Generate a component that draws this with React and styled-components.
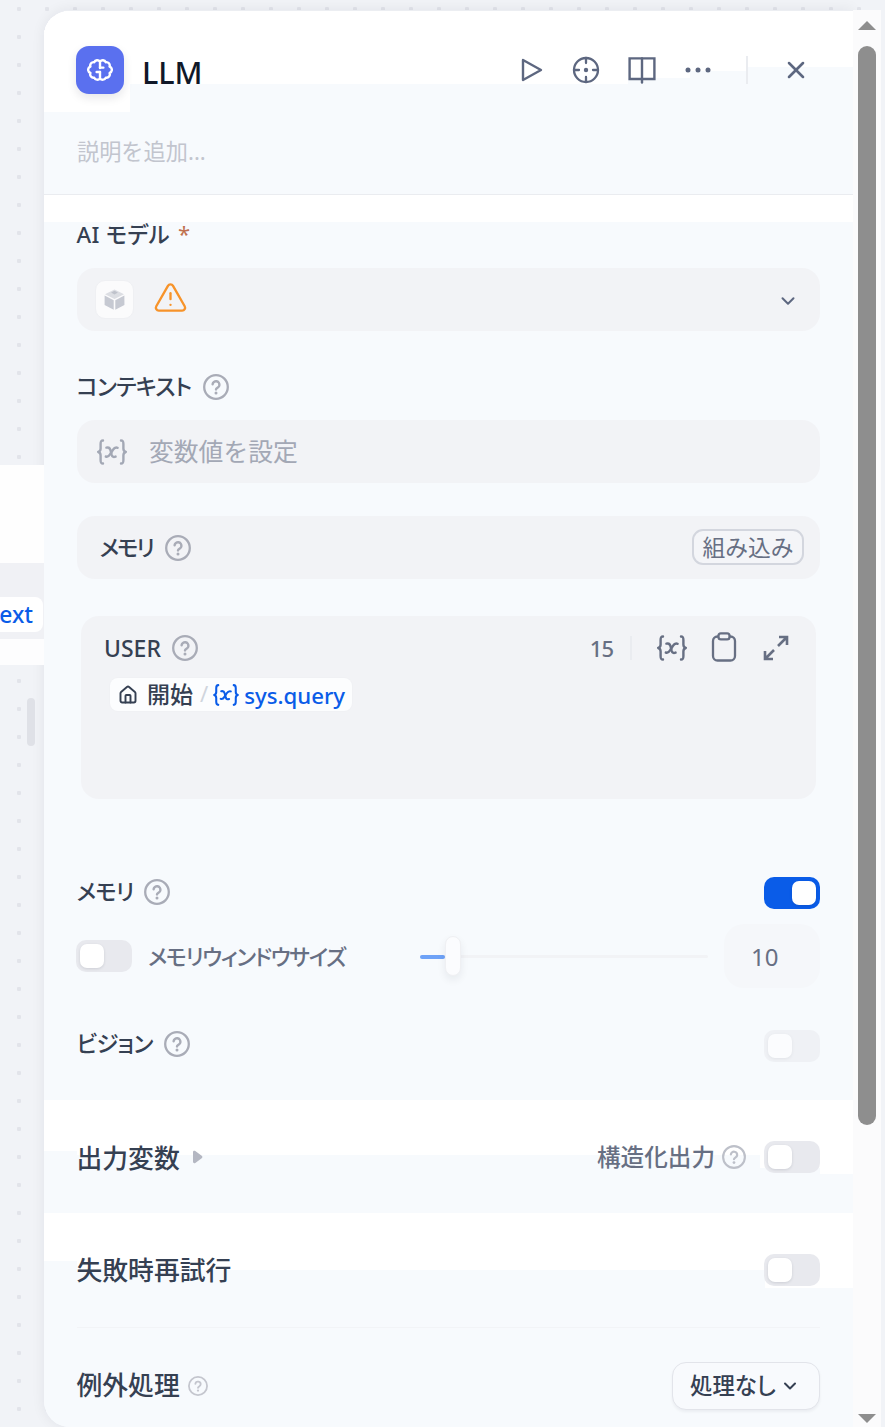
import React from 'react';
import styled, { createGlobalStyle } from 'styled-components';
import { ChevronDown, House, TriangleAlert, X } from 'lucide-react';

const Global = createGlobalStyle`
  html, body { margin: 0; padding: 0; overflow: hidden; background: #f2f4f7; }
  * { box-sizing: border-box; }
`;

const Page = styled.div`
  width: 885px;
  height: 1427px;
  display: flex;
  overflow: hidden;
  font-family: "Noto Sans", "Noto Sans CJK JP", sans-serif;
  background-color: #f1f3f7;
  background-image: radial-gradient(circle at center, #e2e4ea 2px, transparent 2.4px);
  background-size: 28px 28px;
  background-position: 5px -5px;
`;

const Canvas = styled.div`
  position: relative;
  width: 44px;
  flex: none;
  height: 100%;
  overflow: hidden;
`;
const NodeTop = styled.div`
  position: absolute;
  left: 0; right: 0; top: 465px; height: 98px;
  background: #fefefe;
`;
const NodeBody = styled.div`
  position: absolute;
  left: 0; right: 0; top: 563px; height: 102px;
  background: #f0f1f5;
`;
const NodeChip = styled.div`
  position: absolute;
  right: 1px; top: 597px; height: 35px; width: 60px;
  display: flex; align-items: center; justify-content: flex-end;
  padding: 1px 10px 0 0;
  background: #fff;
  border-radius: 8px;
  color: #0a5ce8;
  font-size: 22.8px;
  font-weight: 500;
  line-height: 1;
`;
const NodeRow = styled.div`
  position: absolute;
  left: 0; right: 0; top: 639px; height: 26px;
  background: #fdfdfe;
`;
const NodeBar = styled.div`
  position: absolute;
  left: 27px; top: 698px; width: 8px; height: 48px;
  border-radius: 4px;
  background: #dfe1e7;
`;

const Panel = styled.div`
  margin-top: 10px;
  width: 809px;
  height: 1417px;
  flex: none;
  display: flex;
  flex-direction: column;
  background: #f7fafd;
  border-radius: 26px 0 0 26px;
  border-top: 1px solid #eceef2;
  box-shadow: 0 0 14px rgba(16, 24, 40, 0.07);
  overflow: hidden;
`;

const Header = styled.header`
  height: 184px;
  flex: none;
  border-bottom: 1px solid #eaecf0;
  padding: 35px 43px 0 32px;
  background:
    linear-gradient(#fff, #fff) 0 0 / 86px 101px no-repeat,
    linear-gradient(#fff, #fff) 0 0 / 584px 73px no-repeat,
    linear-gradient(#fff, #fff) 0 0 / 646px 67px no-repeat,
    linear-gradient(#fff, #fff) 0 0 / 703px 60px no-repeat,
    linear-gradient(#fff, #fff) 0 0 / 100% 56px no-repeat,
    #f7fafd;
`;
const TitleRow = styled.div`
  display: flex;
  align-items: center;
  height: 48px;
`;
const NodeIcon = styled.div`
  width: 48px; height: 48px;
  flex: none;
  border-radius: 13px;
  background: #5a70ef;
  display: flex; align-items: center; justify-content: center;
  box-shadow: 0 4px 10px rgba(16, 24, 40, 0.1);
`;
const Title = styled.h1`
  margin: 3px 0 0 18px;
  font-size: 30.5px;
  font-weight: 500;
  line-height: 48px;
  color: #101828;
`;
const Actions = styled.div`
  margin-left: auto;
  display: flex;
  align-items: center;
  color: #5d6780;
`;
const ActionIcon = styled.span`
  display: flex;
  width: ${p => p.$w || 28}px;
  margin-left: ${p => p.$ml || 0}px;
  justify-content: center;
`;
const VDivider = styled.span`
  width: 2px; height: ${p => p.$h}px;
  margin: 0 ${p => p.$mr}px 0 ${p => p.$ml}px;
  background: #eaecf0;
  flex: none;
`;
const Desc = styled.div`
  margin: 43px 0 0 1px;
  font-size: 22.2px;
  line-height: 30px;
  color: #c2c5ce;
`;

const Section = styled.section`
  flex: none;
  padding: 20px 33px 38px;
  background: linear-gradient(#fff, #fff) 0 0 / 100% 27px no-repeat, #f7fafd;
`;
const OutputSection = styled.section`
  flex: none;
  height: 113px;
  padding: 41px 33px 0 33px;
  display: flex;
  align-items: flex-start;
  justify-content: space-between;
  background:
    linear-gradient(#fff, #fff) 0 0 / 33px 51px no-repeat,
    linear-gradient(#fff, #fff) 33px 0 / 100% 55px no-repeat,
    linear-gradient(#fff, #fff) 100% 0 / 93px 68px no-repeat,
    linear-gradient(#fff, #fff) 100% 0 / 33px 74px no-repeat,
    #f7fafd;
`;
const RetrySection = styled.section`
  flex: 1;
  padding: 41px 33px 0;
  background:
    linear-gradient(#fff, #fff) 0 0 / 33px 48px no-repeat,
    linear-gradient(#fff, #fff) 33px 0 / 100% 57px no-repeat,
    linear-gradient(#fff, #fff) 100% 0 / 88px 75px no-repeat,
    #f7fafd;
`;

const LabelRow = styled.div`
  display: flex;
  align-items: center;
  height: ${p => p.$h || 40}px;
  margin-top: ${p => p.$mt || 0}px;
  justify-content: ${p => p.$between ? 'space-between' : 'flex-start'};
`;
const Label = styled.span`
  margin-left: -0.5px;
  font-size: 22.4px;
  font-weight: 500;
  line-height: 32px;
  letter-spacing: ${p => p.$ls ?? -0.7}px;
  color: #354052;
  font-feature-settings: "palt";
  white-space: nowrap;
`;
const BigLabel = styled.span`
  margin-left: -0.5px;
  padding-top: ${p => p.$pt || 0}px;
  padding-bottom: ${p => p.$pb || 0}px;
  font-size: 25.8px;
  font-weight: 500;
  line-height: 32px;
  color: #354052;
  white-space: nowrap;
`;
const Star = styled.span`
  margin: -4px 0 0 8px;
  font-size: 22px;
  line-height: 32px;
  color: #c0714f;
`;
const HelpWrap = styled.span`
  display: flex;
  margin-left: ${p => p.$ml ?? 12}px;
  color: ${p => p.$c || '#a9acb7'};
`;
const FieldBox = styled.div`
  height: 63px;
  margin-top: ${p => p.$mt || 13}px;
  border-radius: 18px;
  background: #f2f3f6;
  display: flex;
  align-items: center;
`;
const ModelField = styled(FieldBox)`
  padding: 0 21px 0 18px;
`;
const ModelIcon = styled.div`
  width: 39px; height: 39px;
  border-radius: 10px;
  background: #fbfbfc;
  border: 1px solid #eff0f3;
  display: flex; align-items: center; justify-content: center;
`;
const WarnWrap = styled.span`
  display: flex;
  margin: 0 0 4px 19px;
  color: #f7932a;
`;
const PushRight = styled.span`
  display: flex;
  margin: 2px 0 0 auto;
  color: #5d6780;
`;
const VarField = styled(FieldBox)`
  padding-left: 20px;
  color: #a3a8b5;
`;
const VarText = styled.span`
  margin: -2px 0 0 22px;
  font-size: 24.8px;
  line-height: 32px;
`;
const MemoryBar = styled(FieldBox)`
  padding: 0 16px 0 23px;
`;
const BuiltIn = styled.div`
  margin: -1px 0 0 auto;
  width: 112px; height: 36px;
  padding-top: 2px;
  border: 2px solid #d3d6de;
  border-radius: 11px;
  background: #f4f5f8;
  display: flex; align-items: center; justify-content: center;
  font-size: 22.8px;
  line-height: 1;
  color: #676f83;
`;
const PromptCard = styled.div`
  margin: 37px 4px 0;
  height: 183px;
  border-radius: 18px;
  background: #f2f3f6;
  padding: 14px 27px 0 23px;
`;
const PromptHead = styled.div`
  display: flex;
  align-items: center;
  height: 36px;
`;
const RoleText = styled.span`
  font-size: 23px;
  font-weight: 500;
  color: #354052;
`;
const PromptTools = styled.div`
  margin-left: auto;
  display: flex;
  align-items: center;
  color: #676f83;
`;
const Count = styled.span`
  font-size: 22px;
  font-weight: 500;
  letter-spacing: -1px;
  color: #676f83;
`;
const ToolIcon = styled.span`
  display: flex;
  margin-left: ${p => p.$ml}px;
  margin-top: ${p => p.$mt || 0}px;
`;
const Chip = styled.div`
  display: inline-flex;
  align-items: center;
  margin: 12px 0 0 6px;
  height: 33px;
  padding: 0 7px 0 8px;
  background: #fcfdfe;
  border-radius: 8px;
  box-shadow: 0 0 0 1px #f0f1f4;
  font-size: 22.2px;
  line-height: 1;
  color: #354052;
`;
const ChipStart = styled.span`
  margin-left: 9px;
  font-size: 23px;
  font-weight: 500;
`;
const ChipSlash = styled.span`
  margin: 0 5px 0 7px;
  color: #d0d5dd;
`;
const ChipIcon = styled.span`
  display: flex;
  color: #0a5ce8;
`;
const ChipVar = styled.span`
  margin: 3px 0 0 5px;
  color: #0a5ce8;
  font-weight: 500;
`;

const Toggle = styled.div`
  width: 56px; height: 32px;
  flex: none;
  border-radius: 10px;
  padding: 4px;
  display: flex;
  justify-content: ${p => p.$on ? 'flex-end' : 'flex-start'};
  background: ${p => p.$on ? '#0a5ce8' : '#e8e9ee'};
  opacity: ${p => p.$faded ? 0.5 : 1};
  &::after {
    content: "";
    width: 24px; height: 24px;
    border-radius: 7px;
    background: #fff;
    box-shadow: 0 1px 3px rgba(16, 24, 40, 0.12);
  }
`;
const MemoryToggle = styled(Toggle)`
  margin-top: 1px;
`;
const WindowRow = styled.div`
  display: flex;
  align-items: center;
  height: 64px;
  margin: 12px 0 0 -1px;
`;
const WindowLabel = styled.span`
  margin-left: 16px;
  width: 272px;
  font-size: 22px;
  font-weight: 500;
  line-height: 32px;
  letter-spacing: -1.3px;
  color: #676f83;
  font-feature-settings: "palt";
  white-space: nowrap;
`;
const Slider = styled.div`
  position: relative;
  width: 288px;
  height: 3px;
  background: #f2f3f6;
  border-radius: 2px;
`;
const SliderFill = styled.div`
  height: 4px;
  background: #6ea2f7;
  border-radius: 2px;
`;
const SliderThumb = styled.div`
  position: absolute;
  top: -19px;
  width: 16px; height: 40px;
  border-radius: 8px;
  background: #fbfcfe;
  border: 1px solid #eff0f3;
  box-shadow: 0 4px 8px rgba(16, 24, 40, 0.07);
`;
const NumberBox = styled.div`
  margin-left: 16px;
  width: 96px; height: 64px;
  border-radius: 20px;
  background: #f5f7fa;
  padding-left: 27px;
  display: flex; align-items: center;
  font-size: 24px;
  color: #676f83;
`;
const RightGroup = styled.div`
  display: flex;
  align-items: center;
`;
const VisionGroup = styled(RightGroup)`
  padding-bottom: 4px;
`;
const Gap = styled.span`
  width: ${p => p.$w}px;
  flex: none;
`;
const SubLabel = styled.span`
  font-size: 23.6px;
  font-weight: 500;
  line-height: 32px;
  color: #676f83;
  white-space: nowrap;
`;
const Caret = styled.span`
  display: flex;
  margin-left: 12px;
  color: #b4b7c2;
`;
const Line = styled.div`
  height: 1px;
  margin-top: 41px;
  background: #f2f4f7;
`;
const ExceptRow = styled.div`
  display: flex;
  align-items: center;
  justify-content: space-between;
  height: 48px;
  margin-top: 34px;
`;
const SelectButton = styled.div`
  width: 148px; height: 48px;
  display: flex; align-items: center;
  padding-left: 17px;
  border: 1px solid #e2e4ea;
  border-radius: 14px;
  background: #f8fafd;
  box-shadow: 0 2px 3px rgba(16, 24, 40, 0.05);
  font-size: 22.4px;
  font-weight: 500;
  line-height: 1;
  color: #354052;
  font-feature-settings: "palt";
`;
const SelectChevron = styled.span`
  display: flex;
  margin-left: 4px;
`;

const Scrollbar = styled.div`
  width: 28px;
  flex: none;
  margin-top: 10px;
  height: 1417px;
  background: #fbfbfc;
  padding: 0 5px;
  display: flex;
  flex-direction: column;
  align-items: center;
`;
const ScrollUp = styled.span`
  display: flex;
  margin-top: 11px;
  color: #8e8e8e;
`;
const ScrollThumb = styled.div`
  width: 18px;
  height: 1079px;
  margin-top: 16px;
  border-radius: 9px;
  background: #8e8e8e;
`;
const ScrollDown = styled.span`
  display: flex;
  margin-top: auto;
  margin-bottom: 4px;
  color: #8e8e8e;
`;

const Help = ({ size = 26 }) => (
  <svg width={size} height={size} viewBox="0 0 26 26" fill="none">
    <circle cx="13" cy="13" r="11.8" stroke="currentColor" strokeWidth="2.3" />
    <path d="M9.6 10.2a3.4 3.4 0 0 1 6.8 1c0 2.2-3.4 2.6-3.4 4.2" stroke="currentColor" strokeWidth="2.4" strokeLinecap="round" fill="none" />
    <circle cx="13" cy="19" r="1.5" fill="currentColor" />
  </svg>
);
const VarIcon = ({ w = 30, h = 28 }) => (
  <svg width={w} height={h} viewBox="0 0 30 28" fill="none" stroke="currentColor" strokeWidth="2.4" strokeLinecap="round" strokeLinejoin="round">
    <path d="M6 2.5C3.6 2.5 3.6 4 3.6 6v4.6c0 2-.9 3-2.4 3.4 1.5.4 2.4 1.4 2.4 3.4V22c0 2 0 3.5 2.4 3.5" />
    <path d="M24 2.5c2.4 0 2.4 1.5 2.4 3.5v4.6c0 2 .9 3 2.4 3.4-1.5.4-2.4 1.4-2.4 3.4V22c0 2 0 3.5-2.4 3.5" />
    <path d="M9.4 9.6c2.3-.6 3.4.2 4 2.3l1.3 4.9c.6 2 1.7 2.7 3.9 1.8" />
    <path d="M20.6 9.8c-2.2-.8-3.6.4-4.8 2.2l-2.6 4.2c-1.1 1.8-2.2 3-4.4 2.3" />
  </svg>
);
const Brain = () => (
  <svg width="26" height="22" viewBox="0 0 26 22" fill="none" stroke="#fff" strokeWidth="2.4" strokeLinecap="round" strokeLinejoin="round">
    <path d="M13 2.6A3.4 3.4 0 0 0 7.2 3.2 3.4 3.4 0 0 0 3.4 7.6 3.4 3.4 0 0 0 3.4 14 3.4 3.4 0 0 0 7.2 18.6 3.4 3.4 0 0 0 13 19.4 3.4 3.4 0 0 0 18.8 18.6 3.4 3.4 0 0 0 22.6 14 3.4 3.4 0 0 0 22.6 7.6 3.4 3.4 0 0 0 18.8 3.2 3.4 3.4 0 0 0 13 2.6Z" />
    <path d="M13 2.6V9M13 13v6.4" />
    <path d="M13 8.6h3.4M13 13H9.6" />
  </svg>
);
const Play = () => (
  <svg width="22" height="26" viewBox="0 0 22 26" fill="none" stroke="currentColor" strokeWidth="2.4" strokeLinejoin="round">
    <path d="M2 3l18 10L2 23Z" />
  </svg>
);
const Target = () => (
  <svg width="28" height="28" viewBox="0 0 28 28" fill="none" stroke="currentColor" strokeWidth="2.3" strokeLinecap="round">
    <circle cx="14" cy="14" r="12" />
    <path d="M14 2v5M14 21v5M2 14h5M21 14h5" />
    <circle cx="14" cy="14" r="2.2" fill="currentColor" stroke="none" />
  </svg>
);
const Book = () => (
  <svg width="28" height="28" viewBox="0 0 28 28" fill="none" stroke="currentColor" strokeWidth="2.4" strokeLinejoin="miter" strokeLinecap="round">
    <path d="M1.6 2.4H26.4V23H1.6Z" />
    <path d="M14 2.4V26.6" />
  </svg>
);
const Dots = () => (
  <svg width="26" height="6" viewBox="0 0 26 6" fill="currentColor">
    <circle cx="3" cy="3" r="2.5" /><circle cx="13" cy="3" r="2.5" /><circle cx="23" cy="3" r="2.5" />
  </svg>
);
const Cube = () => (
  <svg width="21" height="21" viewBox="0 0 21 21">
    <path d="M10.5 0.4L20 5.2 10.5 10 1 5.2Z" fill="#dcdee3" />
    <path d="M10.5 1.8l3.4 1.8-3.4 1.8-3.4-1.8Z" fill="#bfc2cb" />
    <path d="M.6 6.6l9.1 4.7v9.4L.6 16Z" fill="#c6c9d2" />
    <path d="M20.4 6.6l-9.1 4.7v9.4l9.1-4.7Z" fill="#c6c9d2" />
  </svg>
);
const Clipboard = () => (
  <svg width="26" height="30" viewBox="0 0 26 30" fill="none" stroke="currentColor" strokeWidth="2.3" strokeLinejoin="round">
    <rect x="2" y="4.5" width="22" height="24" rx="4.5" />
    <rect x="7.5" y="1.4" width="11" height="6" rx="2.4" fill="#f2f3f6" />
  </svg>
);
const Expand = () => (
  <svg width="26" height="26" viewBox="0 0 26 26" fill="none" stroke="currentColor" strokeWidth="2.6">
    <path d="M15 11l9-9M16 2h8v8" />
    <path d="M11 15l-9 9M10 24H2v-8" />
  </svg>
);
const CaretIcon = () => (
  <svg width="11" height="14" viewBox="0 0 11 14" fill="currentColor">
    <path d="M1 2.2C1 .9 2.3.4 3.3 1.1l6.4 4.6c.9.6.9 2 0 2.6l-6.4 4.6C2.3 13.6 1 13.1 1 11.8Z" />
  </svg>
);
const ArrowUp = () => (
  <svg width="18" height="9" viewBox="0 0 18 9" fill="currentColor"><path d="M9 0l9 9H0Z" /></svg>
);
const ArrowDown = () => (
  <svg width="18" height="9" viewBox="0 0 18 9" fill="currentColor"><path d="M0 0h18L9 9Z" /></svg>
);

export default function App() {
  return (
    <Page>
      <Global />
      <Canvas>
        <NodeTop />
        <NodeBody />
        <NodeChip>ext</NodeChip>
        <NodeRow />
        <NodeBar />
      </Canvas>
      <Panel>
        <Header>
          <TitleRow>
            <NodeIcon><Brain /></NodeIcon>
            <Title>LLM</Title>
            <Actions>
              <ActionIcon $w={22}><Play /></ActionIcon>
              <ActionIcon $ml={29}><Target /></ActionIcon>
              <ActionIcon $ml={28}><Book /></ActionIcon>
              <ActionIcon $ml={29} $w={26}><Dots /></ActionIcon>
              <VDivider $h={28} $ml={35} $mr={34} />
              <ActionIcon $w={28}><X size={28} strokeWidth={2.2} /></ActionIcon>
            </Actions>
          </TitleRow>
          <Desc>説明を追加...</Desc>
        </Header>

        <Section>
          <LabelRow>
            <Label $ls={0.3}>AI モデル</Label>
            <Star>*</Star>
          </LabelRow>
          <ModelField>
            <ModelIcon><Cube /></ModelIcon>
            <WarnWrap><TriangleAlert size={35} strokeWidth={1.6} /></WarnWrap>
            <PushRight><ChevronDown size={22} strokeWidth={2.2} /></PushRight>
          </ModelField>

          <LabelRow $mt={36}>
            <Label>コンテキスト</Label>
            <HelpWrap><Help /></HelpWrap>
          </LabelRow>
          <VarField>
            <VarIcon />
            <VarText>変数値を設定</VarText>
          </VarField>

          <MemoryBar $mt={33}>
            <Label $ls={-2}>メモリ</Label>
            <HelpWrap><Help /></HelpWrap>
            <BuiltIn>組み込み</BuiltIn>
          </MemoryBar>

          <PromptCard>
            <PromptHead>
              <RoleText>USER</RoleText>
              <HelpWrap $ml={11}><Help /></HelpWrap>
              <PromptTools>
                <Count>15</Count>
                <VDivider $h={24} $ml={17} $mr={25} />
                <VarIcon />
                <ToolIcon $ml={24} $mt={-3}><Clipboard /></ToolIcon>
                <ToolIcon $ml={26}><Expand /></ToolIcon>
              </PromptTools>
            </PromptHead>
            <Chip>
              <House size={20} strokeWidth={2.3} />
              <ChipStart>開始</ChipStart>
              <ChipSlash>/</ChipSlash>
              <ChipIcon><VarIcon w={26} h={24} /></ChipIcon>
              <ChipVar>sys.query</ChipVar>
            </Chip>
          </PromptCard>

          <LabelRow $mt={73} $between>
            <RightGroup>
              <Label>メモリ</Label>
              <HelpWrap $ml={10}><Help /></HelpWrap>
            </RightGroup>
            <MemoryToggle $on />
          </LabelRow>

          <WindowRow>
            <Toggle />
            <WindowLabel>メモリウィンドウサイズ</WindowLabel>
            <Slider>
              <SliderFill style={{ width: '25px' }} />
              <SliderThumb style={{ left: '25px' }} />
            </Slider>
            <NumberBox>10</NumberBox>
          </WindowRow>

          <LabelRow $h={32} $mt={42} $between>
            <VisionGroup>
              <Label>ビジョン</Label>
              <HelpWrap $ml={11}><Help /></HelpWrap>
            </VisionGroup>
            <Toggle $faded />
          </LabelRow>
        </Section>

        <OutputSection>
          <LabelRow $h={32}>
            <BigLabel $pt={1}>出力変数</BigLabel>
            <Caret><CaretIcon /></Caret>
          </LabelRow>
          <RightGroup>
            <SubLabel>構造化出力</SubLabel>
            <HelpWrap $ml={7} $c="#bdc0c9"><Help size={24} /></HelpWrap>
            <Gap $w={18} />
            <Toggle />
          </RightGroup>
        </OutputSection>

        <RetrySection>
          <LabelRow $h={32} $between>
            <BigLabel>失敗時再試行</BigLabel>
            <Toggle />
          </LabelRow>
          <Line />
          <ExceptRow>
            <RightGroup>
              <BigLabel $pb={2}>例外処理</BigLabel>
              <HelpWrap $ml={8} $c="#c4c6ce"><Help size={20} /></HelpWrap>
            </RightGroup>
            <SelectButton>
              処理なし
              <SelectChevron><ChevronDown size={20} strokeWidth={2.4} /></SelectChevron>
            </SelectButton>
          </ExceptRow>
        </RetrySection>
      </Panel>
      <Scrollbar>
        <ScrollUp><ArrowUp /></ScrollUp>
        <ScrollThumb />
        <ScrollDown><ArrowDown /></ScrollDown>
      </Scrollbar>
    </Page>
  );
}
